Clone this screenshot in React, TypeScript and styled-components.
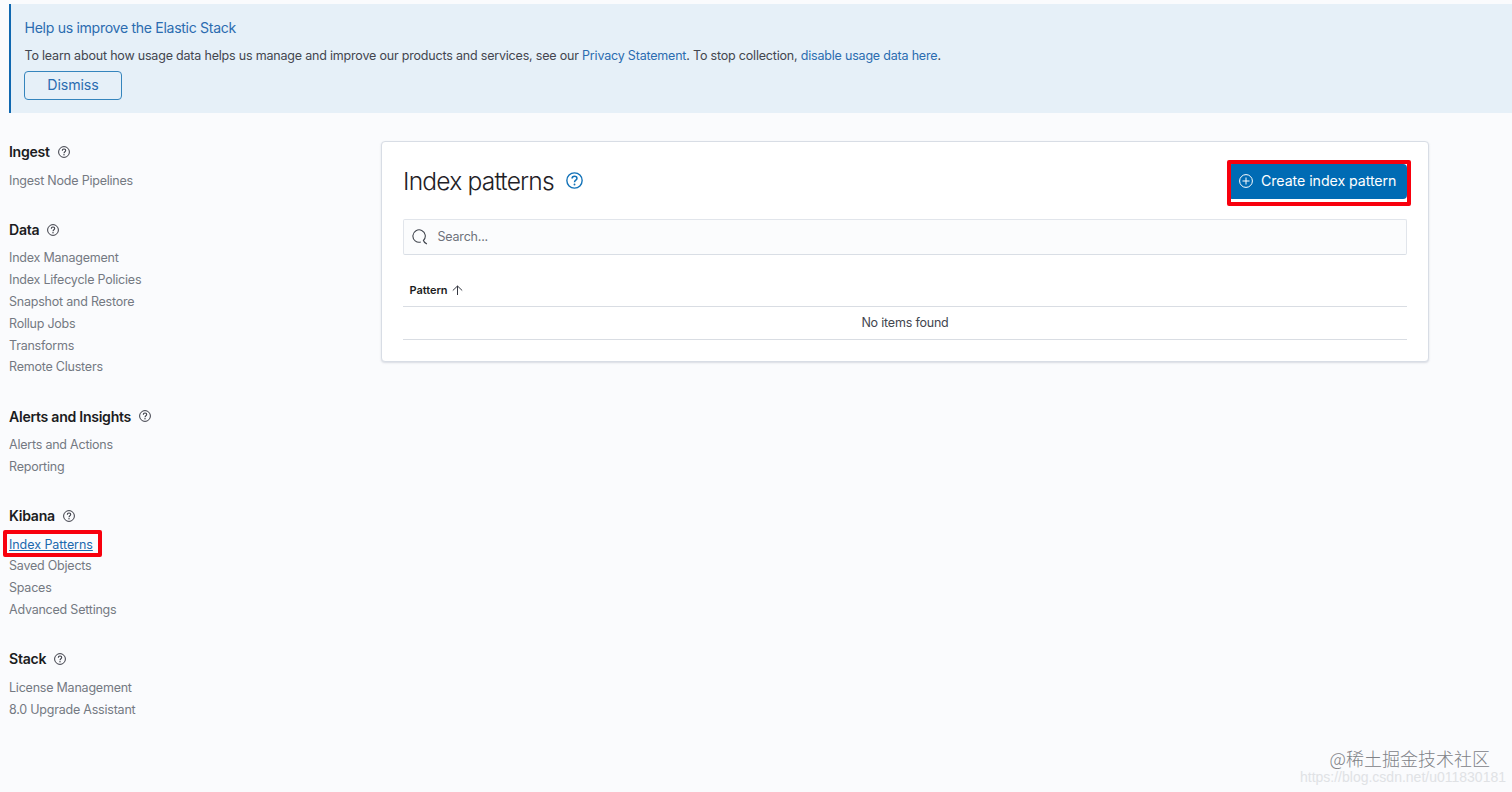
import React from 'react';
import styled, { createGlobalStyle } from 'styled-components';

const GlobalStyle = createGlobalStyle`
  *, *::before, *::after { box-sizing: border-box; }
  body {
    margin: 0;
    background: #fafbfd;
    color: #43464f;
    font-family: Inter, 'Liberation Sans', sans-serif;
    font-size: 12.5px;
    line-height: 21.85px;
    letter-spacing: -0.2px;
    overflow: hidden;
  }
`;

const Page = styled.div`
  position: relative;
  height: 792px;
  padding-top: 4px;
  overflow: hidden;
`;

const CallOut = styled.section`
  height: 109px;
  margin-left: 9px;
  padding: 13px 0 0 13.5px;
  border-left: 2px solid #1068b0;
  background: #e6f0f8;
`;

const CallOutTitle = styled.h2`
  margin: 0 0 6px;
  font-size: 14.1px;
  font-weight: 400;
  line-height: 22px;
  letter-spacing: -0.31px;
  color: #2b6cb0;
`;

const CallOutText = styled.p`
  margin: 0 0 4px;
  line-height: 22px;
  letter-spacing: -0.193px;
`;

const Link = styled.a`
  color: #2b6cb0;
`;

const DismissButton = styled.button`
  display: block;
  width: 98px;
  height: 29px;
  margin-left: -0.5px;
  padding: 0 0 2px;
  border: 1px solid #3585bd;
  border-radius: 4px;
  background: transparent;
  color: #2b6cb0;
  font: 400 14.2px/25px Inter, sans-serif;
  letter-spacing: -0.1px;
`;

const Body = styled.div`
  display: flex;
  align-items: flex-start;
  padding: 28px 83px 0 9px;
`;

const SideNav = styled.nav`
  width: 372px;
  flex: none;
`;

const NavGroup = styled.div`
  margin-bottom: 27.2px;
`;

const NavHeading = styled.h3`
  display: flex;
  align-items: center;
  gap: 8px;
  height: 22px;
  margin: 0 0 6.6px;
  font-size: 14.1px;
  font-weight: 600;
  letter-spacing: -0.28px;
  color: #1a1c21;
`;

const NavItem = styled.a<{ $selected?: boolean }>`
  display: block;
  width: fit-content;
  position: relative;
  color: ${({ $selected }) => ($selected ? '#1b69ae' : '#747982')};
  letter-spacing: ${({ $selected }) => ($selected ? '-0.06px' : '-0.22px')};
  text-decoration: ${({ $selected }) => ($selected ? 'underline' : 'none')};
`;

const Highlight = styled.span<{ $inset: string }>`
  position: absolute;
  inset: ${({ $inset }) => $inset};
  border: 4px solid #f8000d;
  border-radius: 2px;
  pointer-events: none;
`;

const Panel = styled.main`
  flex: 1;
  height: 221px;
  padding: 21px 21px 0;
  border: 1px solid #d8dde5;
  border-radius: 4px;
  background: #fff;
  box-shadow: 0 1px 2px rgba(100, 110, 130, 0.22);
`;

const PanelHeader = styled.header`
  display: flex;
  align-items: center;
  justify-content: space-between;
  height: 36px;
`;

const Title = styled.h1`
  display: flex;
  align-items: center;
  gap: 12px;
  margin: 0;
  font-size: 24.6px;
  font-weight: 300;
  line-height: 36px;
  letter-spacing: -0.82px;
  color: #1f2126;

  svg { margin-bottom: 1px; }
`;

const CreateButton = styled.button`
  position: relative;
  display: flex;
  align-items: center;
  gap: 8px;
  width: 179px;
  height: 35px;
  padding: 0 0 1px 11px;
  border: 0;
  border-radius: 4px;
  background: #006bb4;
  color: #fff;
  font: 400 14.2px/34px Inter, sans-serif;
  letter-spacing: -0.06px;
  white-space: nowrap;
`;

const SearchField = styled.div`
  display: flex;
  align-items: center;
  gap: 9.5px;
  height: 36px;
  margin-top: 20px;
  padding-left: 8px;
  border: 1px solid #e1e5eb;
  border-bottom-color: #d9dee5;
  border-radius: 2px;
  background: #fbfcfd;
  color: #6e727b;

  svg { margin-bottom: 1px; }
`;

const Table = styled.div`
  margin-top: 20px;
`;

const HeaderRow = styled.div`
  display: flex;
  align-items: center;
  gap: 4px;
  height: 32px;
  padding-left: 6.5px;
  border-bottom: 1px solid #d9dde3;
  font-size: 11px;
  font-weight: 600;
  letter-spacing: -0.05px;
  color: #1a1c21;
`;

const EmptyRow = styled.div`
  height: 33px;
  line-height: 32px;
  border-bottom: 1px solid #d9dde3;
  text-align: center;
`;

const Watermark = styled.div`
  position: absolute;
  top: 747px;
  right: 22px;
  color: #808287;
  font: 300 18px/22px 'Noto Sans CJK SC', sans-serif;
  letter-spacing: 0;
  white-space: nowrap;
`;

const WatermarkUrl = styled.div`
  position: absolute;
  top: 769px;
  right: 6px;
  color: #e0e2e5;
  font: 400 14px/16px 'Liberation Sans', sans-serif;
  letter-spacing: 0;
  white-space: nowrap;
`;

function HelpIcon({ size = 12, color = '#343741' }: { size?: number; color?: string }) {
  return (
    <svg width={size} height={size} viewBox="0 0 16 16" fill="none" stroke={color} strokeWidth="1.3">
      <circle cx="8" cy="8" r="7.2" />
      <path d="M5.7 6.2C5.7 4.8 6.7 4 8 4s2.3.8 2.3 2c0 1.7-2.3 1.7-2.3 3.6" strokeWidth="1.4" />
      <circle cx="8" cy="11.7" r=".9" fill={color} stroke="none" />
    </svg>
  );
}

function PlusCircleIcon() {
  return (
    <svg width="14" height="14" viewBox="0 0 14 14" fill="none" stroke="#fff">
      <circle cx="7" cy="7" r="6.4" />
      <path d="M7 3.5v7M3.5 7h7" />
    </svg>
  );
}

function SearchIcon() {
  return (
    <svg width="16" height="16" viewBox="0 0 16 16" fill="none" stroke="#41454e" strokeWidth="1.1">
      <path d="M8.8 13A6.2 6.2 0 1 1 11.4 11.5Q11.9 13.4 14.9 14.9" />
    </svg>
  );
}

function SortUpIcon() {
  return (
    <svg width="11" height="11" viewBox="0 0 11 11" fill="none" stroke="#343741">
      <path d="M5.5 10V1M.8 5.5 5.5 1l4.7 4.5" />
    </svg>
  );
}

const groups = [
  { title: 'Ingest', items: ['Ingest Node Pipelines'] },
  {
    title: 'Data',
    items: [
      'Index Management',
      'Index Lifecycle Policies',
      'Snapshot and Restore',
      'Rollup Jobs',
      'Transforms',
      'Remote Clusters',
    ],
  },
  { title: 'Alerts and Insights', items: ['Alerts and Actions', 'Reporting'] },
  { title: 'Kibana', items: ['Index Patterns', 'Saved Objects', 'Spaces', 'Advanced Settings'] },
  { title: 'Stack', items: ['License Management', '8.0 Upgrade Assistant'] },
];

const selectedItem = 'Index Patterns';

export default function App() {
  return (
    <Page>
      <GlobalStyle />
      <CallOut>
        <CallOutTitle>Help us improve the Elastic Stack</CallOutTitle>
        <CallOutText>
          To learn about how usage data helps us manage and improve our products and services, see our{' '}
          <Link>Privacy Statement</Link>. To stop collection, <Link>disable usage data here</Link>.
        </CallOutText>
        <DismissButton>Dismiss</DismissButton>
      </CallOut>
      <Body>
        <SideNav>
          {groups.map((group) => (
            <NavGroup key={group.title}>
              <NavHeading>
                {group.title}
                <HelpIcon />
              </NavHeading>
              {group.items.map((item) => (
                <NavItem key={item} $selected={item === selectedItem}>
                  {item}
                  {item === selectedItem && <Highlight $inset="-4px -9px -2px -6px" />}
                </NavItem>
              ))}
            </NavGroup>
          ))}
        </SideNav>
        <Panel>
          <PanelHeader>
            <Title>
              Index patterns
              <HelpIcon size={17} color="#1272b8" />
            </Title>
            <CreateButton>
              <PlusCircleIcon />
              Create index pattern
              <Highlight $inset="-4px -4px -7px -1px" />
            </CreateButton>
          </PanelHeader>
          <SearchField>
            <SearchIcon />
            Search...
          </SearchField>
          <Table>
            <HeaderRow>
              Pattern
              <SortUpIcon />
            </HeaderRow>
            <EmptyRow>No items found</EmptyRow>
          </Table>
        </Panel>
      </Body>
      <WatermarkUrl>https://blog.csdn.net/u011830181</WatermarkUrl>
      <Watermark>@稀土掘金技术社区</Watermark>
    </Page>
  );
}
